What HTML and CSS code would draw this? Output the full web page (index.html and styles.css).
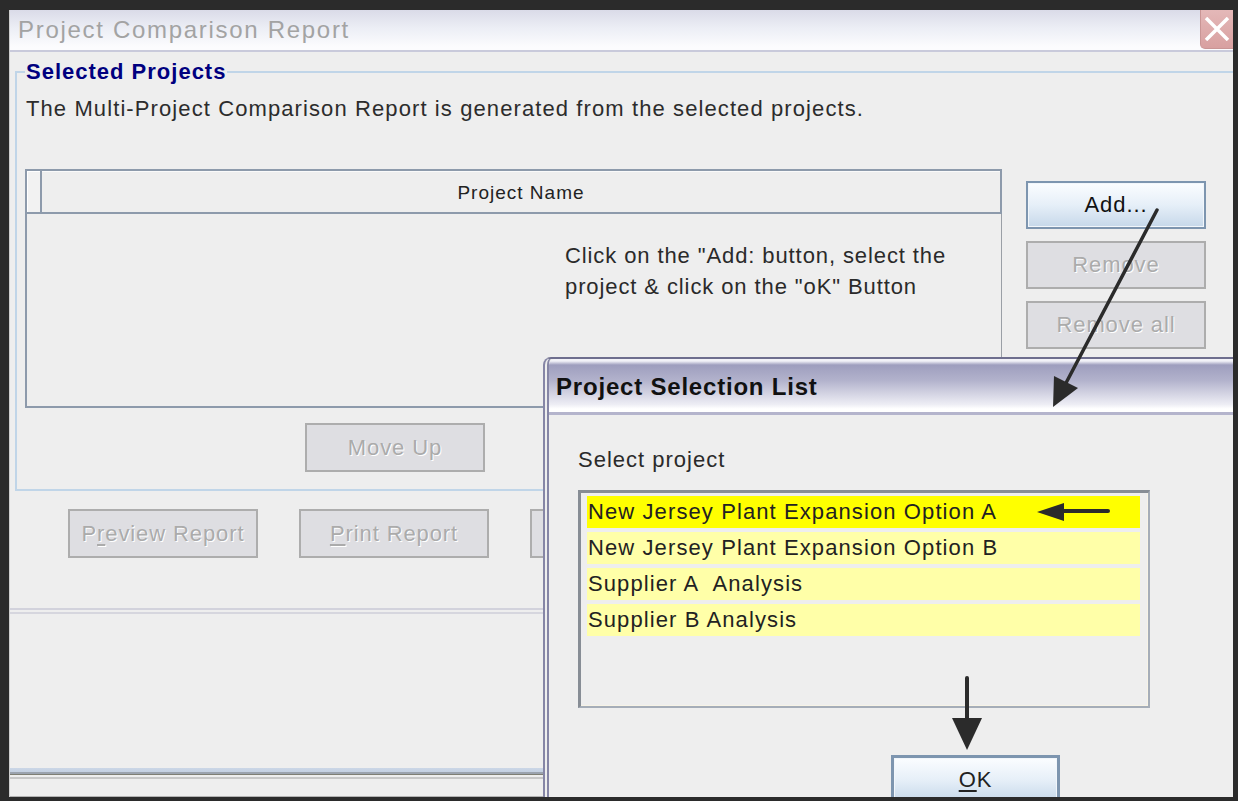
FILE: index.html
```html
<!DOCTYPE html>
<html lang="en">
<head>
<meta charset="utf-8">
<title>Project Comparison Report</title>
<link rel="stylesheet" href="styles.css">
</head>
<body>
<div class="screen">
  <div class="window">
    <div class="titlebar">
      <span class="title">Project Comparison Report</span>
      <span class="close">
        <svg width="26" height="24" viewBox="0 0 26 24"><path d="M2 1 L24 23 M24 1 L2 23" stroke="#ffffff" stroke-width="3.5" fill="none"/></svg>
      </span>
    </div>

    <div class="content">
      <fieldset class="group">
        <legend>Selected Projects</legend>
        <p class="desc">The Multi-Project Comparison Report is generated from the selected projects.</p>
        <div class="table-row">
          <div class="table">
            <div class="thead">
              <div class="th corner"></div>
              <div class="th name">Project Name</div>
            </div>
            <div class="tbody">
              <p class="hint">Click on the "Add: button, select the<br>project &amp; click on the "oK" Button</p>
            </div>
          </div>
          <div class="side-buttons">
            <button class="btn primary side">Add...</button>
            <button class="btn side">Remove</button>
            <button class="btn side">Remove all</button>
          </div>
        </div>
        <div class="move-row">
          <button class="btn move">Move Up</button>
        </div>
      </fieldset>

      <div class="report-row">
        <button class="btn wide">P<u>r</u>eview Report</button>
        <button class="btn wide"><u>P</u>rint Report</button>
        <button class="btn wide" aria-label="Close"></button>
      </div>
      <div class="separator"></div>
    </div>

    <div class="footer-rule"></div>
    <div class="statusbar"></div>

    <div class="dialog">
      <div class="dialog-title">Project Selection List</div>
      <div class="dialog-body">
        <p class="select-label">Select project</p>
        <div class="list">
          <div class="item selected">New Jersey Plant Expansion Option A</div>
          <div class="item">New Jersey Plant Expansion Option B</div>
          <div class="item">Supplier A&nbsp; Analysis</div>
          <div class="item">Supplier B Analysis</div>
        </div>
        <button class="btn primary ok"><u>O</u>K</button>
      </div>
    </div>
  </div>

  <svg class="arrows" width="1238" height="801" viewBox="0 0 1238 801">
    <g fill="#2b2b2b" stroke="#2b2b2b" stroke-linecap="round">
      <line x1="1157" y1="210" x2="1066" y2="383" stroke-width="3.5"/>
      <polygon points="1053,407 1054,376 1078,388" stroke="none"/>
      <line x1="1062" y1="511" x2="1108" y2="511" stroke-width="4"/>
      <polygon points="1037,512 1064,503 1064,521" stroke="none"/>
      <line x1="967" y1="678" x2="967" y2="722" stroke-width="4"/>
      <polygon points="952,718 982,718 967,750" stroke="none"/>
    </g>
  </svg>
</div>
</body>
</html>
```

FILE: styles.css
```css
* {
  box-sizing: border-box;
}

body {
  margin: 0;
  background: #2b2b2b;
  font-family: "Liberation Sans", Arial, sans-serif;
  font-size: 22px;
  letter-spacing: 1px;
  color: #2a2a2a;
}

p {
  margin: 0;
}

.screen {
  position: relative;
  width: 1238px;
  height: 801px;
  padding: 10px 5px 4px 9px;
  overflow: hidden;
}

/* main window */
.window {
  position: relative;
  height: 787px;
  background: #eeeeee;
  border-left: 1px solid #cfcfcf;
  overflow: hidden;
  display: flex;
  flex-direction: column;
}

.titlebar {
  flex: none;
  height: 42px;
  display: flex;
  align-items: flex-start;
  background: linear-gradient(#dadbe8, #eceef5 45%, #fcfcfe 92%);
  border-bottom: 2px solid #c9cadb;
}

.title {
  margin-top: 5px;
  padding-left: 8px;
  font-size: 24px;
  line-height: 29px;
  letter-spacing: 1.7px;
  color: #a3a3a3;
}

.close {
  margin-left: auto;
  margin-right: -7px;
  width: 40px;
  height: 39px;
  display: flex;
  align-items: center;
  justify-content: center;
  padding-right: 6px;
  background: linear-gradient(#e4b8b8, #d8a0a0);
  border: 1px solid #c99595;
  border-top: 0;
  border-radius: 0 0 0 5px;
}

.content {
  flex: none;
}

/* titled group */
.group {
  margin: 8px 0 0 5px;
  padding: 13px 0 17px 8px;
  border: 2px solid #c0d5e8;
  border-right: 0;
  min-inline-size: 0;
}

.group legend {
  padding: 0 1px;
  font-weight: bold;
  font-size: 22px;
  line-height: 24px;
  letter-spacing: 1px;
  color: #00007f;
}

.desc {
  line-height: 24px;
  padding-left: 1px;
  letter-spacing: 1.1px;
  color: #2c2c2c;
}

.table-row {
  margin-top: 48px;
  display: flex;
  align-items: flex-start;
}

.table {
  width: 977px;
  height: 239px;
  display: flex;
  flex-direction: column;
  border: 2px solid #8d9aab;
  border-right: 0;
}

.thead {
  flex: none;
  height: 43px;
  display: flex;
  border-bottom: 2px solid #8d9aab;
}

.th.corner {
  width: 15px;
  border-right: 2px solid #8d9aab;
  box-shadow: inset 1px 1px 0 #ffffff;
  background: #f2f2f2;
}

.th.name {
  flex: 1;
  text-align: center;
  font-size: 19px;
  line-height: 43px;
  letter-spacing: 1px;
  color: #222222;
  border-right: 2px solid #8d9aab;
  box-shadow: inset 0 1px 0 #fafafa;
}

.tbody {
  flex: 1;
  border-right: 1px solid #9a9fa6;
  padding: 26px 0 0 538px;
}

.hint {
  line-height: 31px;
  letter-spacing: 0.9px;
  color: #2a2a2a;
}

.side-buttons {
  margin-left: 24px;
  padding-top: 12px;
  display: flex;
  flex-direction: column;
  gap: 12px;
}

/* buttons */
.btn {
  font: inherit;
  letter-spacing: 0.9px;
  height: 49px;
  padding: 0;
  border: 2px solid #adadad;
  border-radius: 0;
  background: #dedee2;
  color: #ababab;
  text-shadow: 1px 1px 0 #ffffff;
}

.btn u {
  text-underline-offset: 3px;
}

.btn.primary {
  border: 2px solid #7d95af;
  box-shadow: inset 0 0 0 1px #f1f6fb;
  background: linear-gradient(#fbfdff, #e6eff8 50%, #c6d8ea);
  color: #111111;
  text-shadow: none;
}

.btn.side {
  width: 180px;
  height: 48px;
}

.move-row {
  margin-top: 15px;
  padding-left: 280px;
}

.btn.move {
  width: 180px;
}

.report-row {
  margin-top: 18px;
  padding-left: 58px;
  display: flex;
  gap: 41px;
}

.btn.wide {
  width: 190px;
}

.separator {
  margin-top: 50px;
  height: 6px;
  border-top: 2px solid #d2d2dc;
  border-bottom: 2px solid #d6d6de;
}

.footer-rule {
  margin-top: auto;
  flex: none;
  height: 11px;
  background: linear-gradient(#cbd6e6 0, #c4d0e2 4px, #9ba3ae 4px, #9ba3ae 6px, #7e7e74 6px, #7e7e74 7px, #eeeeee 7px, #eeeeee 9px, #c8c8c8 9px, #c8c8c8 11px);
}

.statusbar {
  flex: none;
  height: 18px;
  border-bottom: 1px solid #b2b2b2;
}

/* selection dialog laid over the window */
.dialog {
  position: absolute;
  left: 533px;
  top: 347px;
  width: 720px;
  height: 470px;
  background: #eeeeee;
  border-left: 6px double #8686a6;
  border-top: 2px solid #6e6e8e;
  border-top-left-radius: 8px;
}

.dialog-title {
  height: 56px;
  padding: 14px 0 0 7px;
  font-weight: bold;
  font-size: 24px;
  line-height: 28px;
  letter-spacing: 0.8px;
  color: #111111;
  background: linear-gradient(#f2f2f8 0, #f2f2f8 2px, #9e9ebe 6px, #b2b2cc 40%, #eeeef5 86%, #ffffff 94%);
  border-bottom: 3px solid #b4b4cc;
  border-top-left-radius: 6px;
}

.dialog-body {
  padding: 33px 0 0 29px;
}

.select-label {
  line-height: 24px;
  letter-spacing: 1px;
  color: #2a2a2a;
}

.list {
  margin-top: 18px;
  width: 572px;
  height: 218px;
  padding: 3px 8px 0 6px;
  display: flex;
  flex-direction: column;
  gap: 4px;
  border-style: solid;
  border-width: 3px 2px 2px 3px;
  border-color: #878d95 #a5adb8 #a5adb8 #878d95;
  box-shadow: inset -1px -1px 0 #f7f3e6;
}

.item {
  height: 32px;
  line-height: 32px;
  padding-left: 1px;
  letter-spacing: 1.1px;
  background: #ffffa8;
  color: #222222;
}

.item.selected {
  background: #ffff00;
}

.btn.ok {
  display: block;
  margin: 47px 0 0 313px;
  width: 169px;
  height: 50px;
  border-width: 3px;
  color: #222222;
}

.arrows {
  position: absolute;
  left: 0;
  top: 0;
  pointer-events: none;
}
```
